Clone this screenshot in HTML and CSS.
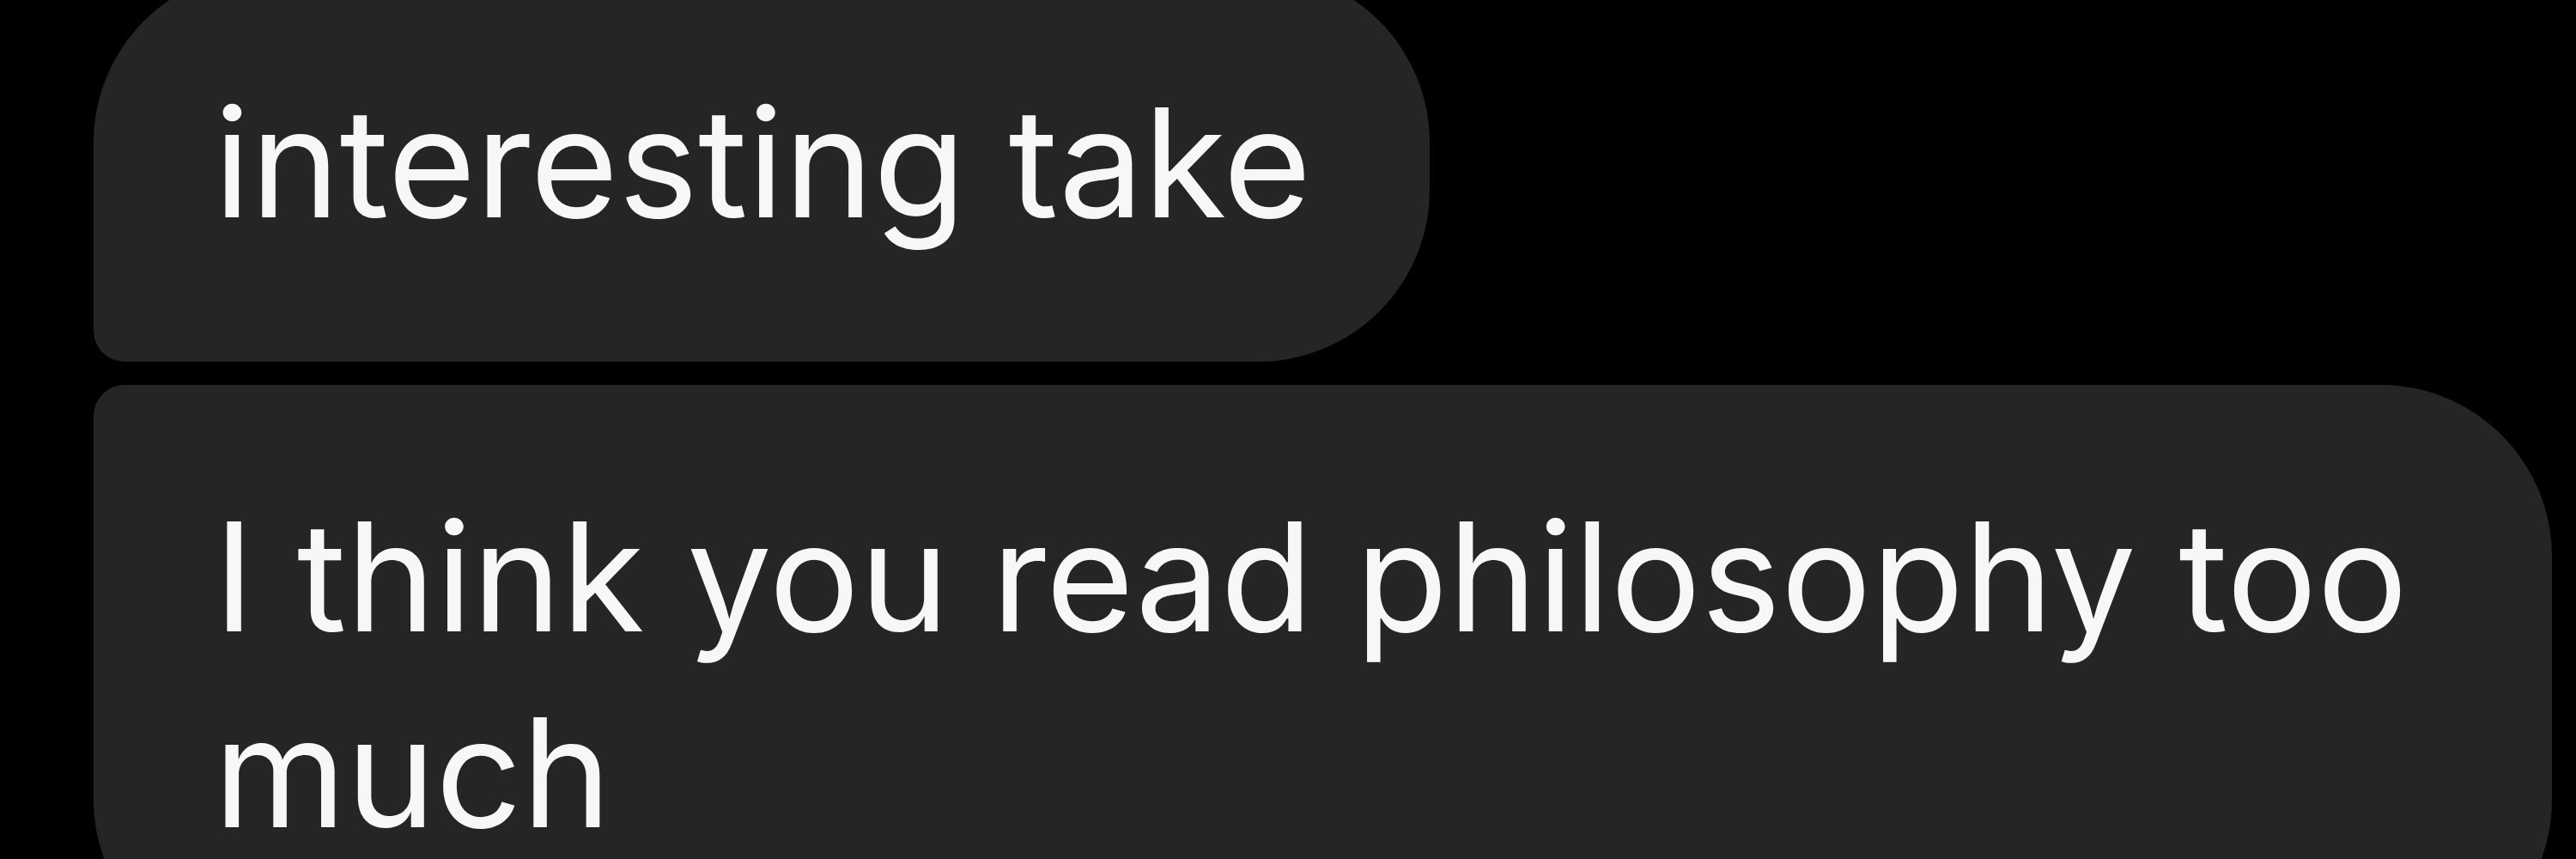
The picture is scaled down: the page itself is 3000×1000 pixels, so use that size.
FILE: index.html
```html
<!DOCTYPE html>
<html lang="en">
<head>
    <meta charset="UTF-8">
    <meta name="viewport" content="width=device-width, initial-scale=1.0">
    <title>Messages</title>
    <link rel="stylesheet" href="styles.css">
</head>
<body>

    <div class="thread">
        <div class="bubble bubble-first">interesting take</div>
        <div class="bubble bubble-last">I think you read philosophy too much</div>
    </div>

</body>
</html>
```
FILE: styles.css
```css
body {
    background-color: #000000;
    color: #f7f7f7;
    font-family: Inter, "Liberation Sans", Arial, sans-serif;
    margin: 0;
    padding: 0;
    height: 100vh;
    overflow: hidden;
}
.thread {
    display: flex;
    flex-direction: column;
    align-items: flex-start;
    gap: 27px;
    padding: 0 28px 0 109px;
    margin-top: -34px;
}
.bubble {
    box-sizing: border-box;
    max-width: 100%;
    background-color: #252525; /* received message grey */
    padding: 109px 138px 118px 140px;
    font-size: 176px;
    line-height: 228px;
}
/* bubbles in the same group share a tight corner on the left */
.bubble-first {
    border-radius: 200px 200px 200px 36px;
}
.bubble-last {
    border-radius: 36px 200px 200px 200px;
}
```
